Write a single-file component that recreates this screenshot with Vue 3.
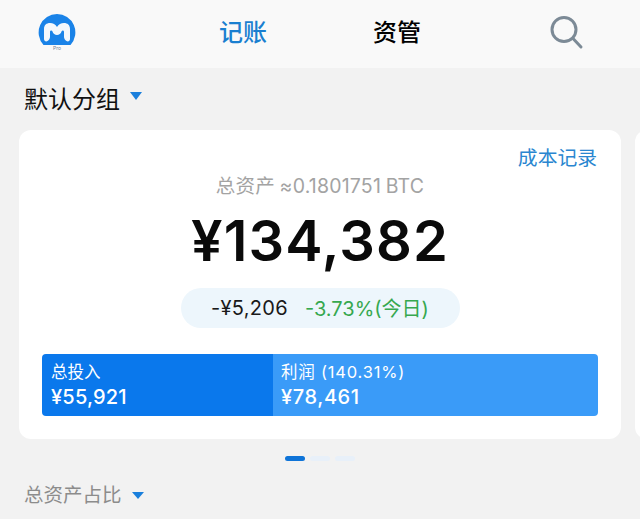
<script setup>
const dots = [0, 1, 2]
</script>

<template>
  <div class="page">
    <div class="header">
      <div class="logo">
        <svg width="40" height="40" viewBox="0 0 40 40">
          <path d="M20 2 A18.5 18.5 0 0 1 33.5 33 L6.5 33 A18.5 18.5 0 0 1 20 2 Z" fill="#1a83e8" />
          <path d="M7 27 V17 C7 13 9.5 11 13 11 C16 11 18.5 12.5 20 15 C21.5 12.5 24 11 27 11 C30.5 11 33 13 33 17 V27 C33 29 31 30 29.5 29 C28 28 27 26.5 27 25 V20 C27 18 25 18 24.5 19.5 C24 21.5 22 23 20 23 C18 23 16 21.5 15.5 19.5 C15 18 13 18 13 20 V25 C13 26.5 12 28 10.5 29 C9 30 7 29 7 27 Z" fill="#f4f8fc" />
          <text x="20" y="38" text-anchor="middle" class="pro">Pro</text>
        </svg>
      </div>
      <div class="tab active">记账</div>
      <div class="tab second">资管</div>
      <div class="search">
        <svg width="34" height="34" viewBox="0 0 34 34" fill="none" stroke="#7c8a96" stroke-width="3" stroke-linecap="round">
          <circle cx="14" cy="13.5" r="12" />
          <path d="M23 22.5 L31 31" />
        </svg>
      </div>
    </div>

    <div class="group">
      <span>默认分组</span>
      <i class="caret"></i>
    </div>

    <div class="slider">
      <div class="card">
        <div class="record">成本记录</div>
        <div class="btc">总资产 ≈0.1801751 BTC</div>
        <div class="total">¥134,382</div>
        <div class="today">
          <span class="loss">-¥5,206</span>
          <span class="rate">-3.73%(今日)</span>
        </div>
        <div class="split">
          <div class="cell cost">
            <div>总投入</div>
            <div class="money">¥55,921</div>
          </div>
          <div class="cell profit">
            <div>利润 (140.31%)</div>
            <div class="money">¥78,461</div>
          </div>
        </div>
      </div>
      <div class="next"></div>
    </div>

    <div class="dots">
      <span v-for="d in dots" :key="d" class="dot" :class="{ on: d === 0 }"></span>
    </div>

    <div class="share">
      <span>总资产占比</span>
      <i class="caret small"></i>
    </div>
  </div>
</template>

<style scoped>
.page {
  width: 640px;
  height: 519px;
  overflow: hidden;
  background: #f2f2f2;
  font-family: Inter, "Noto Sans CJK SC", sans-serif;
}

.header {
  height: 68px;
  background: #f9f9f9;
  display: flex;
  align-items: center;
  padding-left: 37px;
  box-sizing: border-box;
}

.logo {
  width: 40px;
  height: 40px;
  margin-top: -4px;
  margin-right: 142px;
}

.pro {
  font-size: 5px;
  fill: #6f8296;
  font-family: Inter, sans-serif;
}

.tab {
  font-size: 24px;
  font-weight: 500;
  color: #000;
  margin-top: -2px;
  line-height: 1.4;
}

.tab.active {
  color: #1a7fd0;
}

.tab.second {
  margin-left: 106px;
}

.search {
  height: 34px;
  margin-left: 129px;
  margin-top: -2px;
}

.group {
  height: 62px;
  padding-left: 24px;
  display: flex;
  align-items: center;
  gap: 10px;
  font-size: 24px;
  color: #111;
  box-sizing: border-box;
  padding-bottom: 3px;
}

.caret {
  width: 0;
  height: 0;
  border-left: 6.5px solid transparent;
  border-right: 6.5px solid transparent;
  border-top: 8px solid #1a7fdc;
  margin-bottom: 3px;
}

.slider {
  display: flex;
  gap: 14px;
  padding-left: 19px;
}

.card {
  flex: 0 0 602px;
  height: 309px;
  box-sizing: border-box;
  background: #fff;
  border-radius: 12px;
  padding: 14px 23px 0;
  display: flex;
  flex-direction: column;
  align-items: center;
}

.next {
  flex: 0 0 40px;
  height: 309px;
  background: #fff;
  border-radius: 12px;
}

.record {
  align-self: flex-end;
  font-size: 19.8px;
  line-height: 28px;
  color: #2a86d0;
  margin-right: 1px;
}

.btc {
  font-size: 19.5px;
  line-height: 26px;
  color: #a3a3a3;
  margin-top: 1px;
  word-spacing: -1px;
  letter-spacing: 0.2px;
}

.total {
  font-size: 56px;
  font-weight: 600;
  line-height: 68px;
  color: #0a0a0a;
  margin-top: 8px;
  letter-spacing: 1.1px;
}

.today {
  width: 279px;
  height: 40px;
  margin-top: 13px;
  border-radius: 20px;
  background: #edf6fc;
  display: flex;
  align-items: center;
  justify-content: center;
  gap: 17px;
  font-size: 20px;
}

.today span {
  margin-top: -1px;
}

.loss {
  color: #1a1a1a;
  letter-spacing: 0.3px;
}

.rate {
  color: #36a84f;
}

.split {
  align-self: stretch;
  margin: 26px 0 0;
  height: 62px;
  display: flex;
  border-radius: 4px;
  overflow: hidden;
  color: #fff;
}

.cell {
  box-sizing: border-box;
  padding: 6px 9px 0 9px;
  font-size: 16.5px;
  line-height: 24px;
}

.cost {
  width: 231px;
  background: #0a78ec;
}

.profit {
  flex: 1;
  background: #3a9bf8;
  padding-left: 8px;
  letter-spacing: 0.8px;
}

.money {
  font-size: 20px;
  line-height: 26px;
  font-weight: 500;
  letter-spacing: 0.2px;
}

.profit .money {
  letter-spacing: 0.6px;
}

.dots {
  height: 38px;
  display: flex;
  justify-content: center;
  align-items: center;
  gap: 5px;
}

.dot {
  width: 20px;
  height: 5px;
  border-radius: 3px;
  background: #e8f0f9;
}

.dot.on {
  background: #0f74d8;
}

.share {
  padding-left: 24px;
  display: flex;
  align-items: center;
  gap: 10px;
  font-size: 19.5px;
  line-height: 36px;
  color: #8c8c8c;
}

.caret.small {
  border-left-width: 6px;
  border-right-width: 6px;
  border-top-width: 7.5px;
  margin-bottom: 0;
}
</style>
